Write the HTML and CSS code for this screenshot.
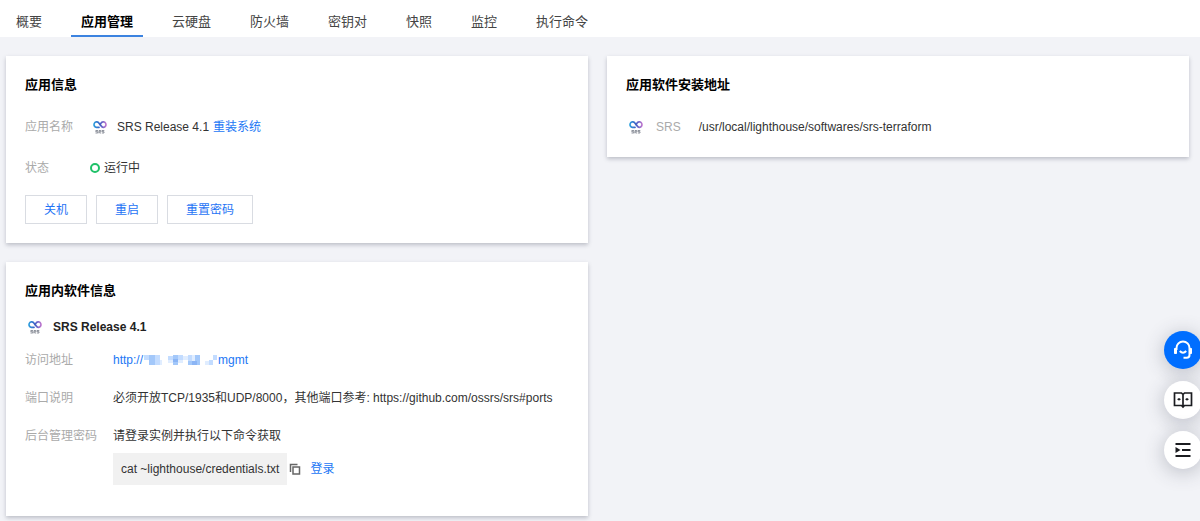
FILE: index.html
```html
<!DOCTYPE html>
<html lang="zh-CN">
<head>
<meta charset="utf-8">
<meta name="viewport" content="width=device-width, initial-scale=1">
<title>应用管理</title>
<link rel="stylesheet" href="styles.css">
</head>
<body>
<svg class="defs" aria-hidden="true">
  <defs>
    <linearGradient id="srs-gradient" gradientUnits="userSpaceOnUse" x1="3" x2="17" y1="0" y2="0">
      <stop offset="0" stop-color="#2ba5e0"/>
      <stop offset="0.5" stop-color="#3f5fc4"/>
      <stop offset="1" stop-color="#d17bd0"/>
    </linearGradient>
    <symbol id="srs-logo" viewBox="0 0 20 20">
      <path d="M9 10.300H6.500A2.700 2.700 0 1 1 8.600 5.700L11.800 9.600Q12.400 10.300 13.500 10.300A2.700 2.700 0 1 0 11.400 5.700L9.800 7.600" fill="none" stroke="url(#srs-gradient)" stroke-width="1.700" stroke-linecap="round"/>
      <path d="M8 13.500H5.800v1.200h2v1.300H5.500M9 16.400v-2.900h1.800v1.400H9.300l1.600 1.500M14.300 13.500H12v1.200h2v1.300H11.800" fill="none" stroke="#777c88" stroke-width="0.800"/>
    </symbol>
  </defs>
</svg>
<nav class="tabs">
  <a class="tab" href="#overview">概要</a>
  <a class="tab tab-active" href="#app" aria-current="page">应用管理</a>
  <a class="tab" href="#disk">云硬盘</a>
  <a class="tab" href="#firewall">防火墙</a>
  <a class="tab" href="#keys">密钥对</a>
  <a class="tab" href="#snapshot">快照</a>
  <a class="tab" href="#monitor">监控</a>
  <a class="tab" href="#command">执行命令</a>
</nav>
<main class="content">
  <div class="column">
    <section class="card">
      <h2 class="card-title">应用信息</h2>
      <dl class="info">
        <dt>应用名称</dt>
        <dd class="app-name"><svg class="logo" aria-hidden="true"><use href="#srs-logo"/></svg><span>SRS Release 4.1</span><a href="#reinstall">重装系统</a></dd>
        <dt>状态</dt>
        <dd class="status"><span class="status-dot"></span>运行中</dd>
      </dl>
      <div class="actions">
        <button class="button" type="button">关机</button>
        <button class="button" type="button">重启</button>
        <button class="button" type="button">重置密码</button>
      </div>
    </section>
    <section class="card card-software">
      <h2 class="card-title">应用内软件信息</h2>
      <h3 class="software-name"><svg class="logo" aria-hidden="true"><use href="#srs-logo"/></svg>SRS Release 4.1</h3>
      <dl class="details">
        <dt>访问地址</dt>
        <dd><a class="address" href="#mgmt">http://<svg class="mosaic" viewBox="0 0 75 12" aria-hidden="true">
          <path d="M1 1h5v5H1zM12 1h5v10h-5zM25 2h5v4h-5zM35 1h5v5h-5zM45 1h4v6h-4zM66 6h4v5h-4zM70 1h4v5h-4z" fill="#c3dcff"/>
          <path d="M6 1h6v10H6zM30 1h5v10h-5zM45 7h12v4H45zM52 1h5v6h-5z" fill="#a3c8fa"/>
          <path d="M25 6h5v3h-5zM35 6h5v3h-5zM49 1h3v6h-3zM40 2h5v4h-5zM62 7h4v4h-4zM17 6h2v5h-2z" fill="#e0edff"/>
          <path d="M30 5h5v3h-5zM49 7h5v4h-5z" fill="#8bb5f5"/>
        </svg>mgmt</a></dd>
        <dt>端口说明</dt>
        <dd>必须开放TCP/1935和UDP/8000，其他端口参考: https://github.com/ossrs/srs#ports</dd>
        <dt>后台管理密码</dt>
        <dd>请登录实例并执行以下命令获取
          <div class="command">
            <code class="command-text">cat ~lighthouse/credentials.txt</code>
            <button class="copy" type="button" aria-label="复制"><svg viewBox="0 0 12 12" aria-hidden="true"><path d="M1.500 9V1.500H8.500M4 4h6.500v7H4z" fill="none" stroke="#666" stroke-width="1.500"/></svg></button>
            <a href="#login">登录</a>
          </div>
        </dd>
      </dl>
    </section>
  </div>
  <div class="column">
    <section class="card">
      <h2 class="card-title">应用软件安装地址</h2>
      <dl class="install">
        <dt><svg class="logo" aria-hidden="true"><use href="#srs-logo"/></svg>SRS</dt>
        <dd>/usr/local/lighthouse/softwares/srs-terraform</dd>
      </dl>
    </section>
  </div>
</main>
<aside class="float-bar">
  <button class="float-button float-primary" type="button" aria-label="在线客服">
    <svg viewBox="0 0 20 20" fill="none" stroke="#fff" stroke-width="2" aria-hidden="true"><path d="M3.500 10V8a6.500 6.500 0 0 1 13 0v7a2.800 2.800 0 0 1-2.800 2.800H10.500"/><path d="M1.500 8.500h2v5h-2zM16.500 8.500h2v5h-2z" fill="#fff" stroke-width="1"/><path d="M6.800 11q3.200 3.500 6.400 0"/></svg>
  </button>
  <button class="float-button" type="button" aria-label="文档">
    <svg viewBox="0 0 20 20" fill="none" stroke="#1b1c20" stroke-width="1.700" aria-hidden="true"><path d="M10 4.500 8.500 3H1.500v12.500h7L10 17l1.500-1.500h7V3h-7L10 4.500V17"/><path d="M4.500 9.300h3M12.500 9.300h3M6 8v2.600M14 8v2.600" stroke-width="1.200"/></svg>
  </button>
  <button class="float-button" type="button" aria-label="展开菜单">
    <svg viewBox="0 0 20 20" fill="none" stroke="#1b1c20" stroke-width="1.800" aria-hidden="true"><path d="M2.500 4h15M9 10h8.500M2.500 16h15"/><path d="M2.500 7v6L7.500 10z" fill="#1b1c20" stroke="none"/></svg>
  </button>
</aside>
</body>
</html>
```

FILE: styles.css
```css
* {
  box-sizing: border-box;
}

body {
  margin: 0;
  min-height: 100vh;
  background: #f2f3f7;
  color: #333;
  font-family: "Liberation Sans", "Noto Sans CJK SC", sans-serif;
  font-size: 12px;
  line-height: 18px;
}

a {
  color: #2277f5;
  text-decoration: none;
}

h2,
h3,
dl,
dd {
  margin: 0;
}

.defs {
  position: absolute;
  width: 0;
  height: 0;
}

.tabs {
  display: flex;
  gap: 19px;
  padding: 0 6px;
  background: #fff;
}

.tab {
  padding: 13px 10px 4px;
  border-bottom: 2px solid transparent;
  color: #444;
  font-size: 13px;
}

.tab-active {
  border-bottom-color: #3c83e0;
  color: #000;
  font-weight: 700;
}

.content {
  display: grid;
  grid-template-columns: 1fr 1fr;
  gap: 19px;
  align-items: start;
  padding: 19px 11px 4px 6px;
}

.column {
  display: grid;
  gap: 19px;
}

.card {
  padding: 20px 19px 19px;
  background: #fff;
  box-shadow: 0 2px 4px rgba(54, 58, 80, 0.28);
}

.card-title {
  color: #000;
  font-size: 13px;
  line-height: 18px;
}

.logo {
  flex: none;
  width: 20px;
  height: 20px;
}

dt {
  color: #aaa;
}

.info {
  display: grid;
  grid-template-columns: 65px 1fr;
  row-gap: 22px;
  align-items: center;
  padding-top: 23px;
}

.app-name {
  display: flex;
  align-items: center;
  height: 20px;
}

.app-name span {
  margin: 0 4px 0 7px;
}

.status {
  display: flex;
  align-items: center;
  gap: 4px;
}

.status-dot {
  width: 10px;
  height: 10px;
  border: 2px solid #1fc168;
  border-radius: 50%;
}

.actions {
  display: flex;
  gap: 9px;
  padding-top: 18px;
}

.button {
  height: 29px;
  padding: 0 18px;
  border: 1px solid #d9dce2;
  background: #fff;
  color: #1f74f5;
  font: inherit;
}

.card-software {
  padding-bottom: 31px;
}

.software-name {
  display: flex;
  align-items: center;
  gap: 8px;
  padding-top: 17px;
  color: #222;
  font-size: 12px;
}

.details {
  display: grid;
  grid-template-columns: 88px 1fr;
  row-gap: 20px;
  padding-top: 14px;
}

.address {
  display: flex;
  align-items: center;
}

.mosaic {
  width: 75px;
  height: 12px;
}

.command {
  display: flex;
  align-items: center;
  padding-top: 8px;
}

.command-text {
  padding: 7px 8px;
  background: #f1f1f1;
  font: inherit;
}

.copy {
  display: flex;
  margin: 0 9px 0 2px;
  padding: 0;
  border: 0;
  background: none;
}

.copy svg {
  width: 12px;
  height: 12px;
}

.install {
  display: flex;
  align-items: center;
  gap: 18px;
  padding: 23px 0 1px;
}

.install dt {
  display: flex;
  align-items: center;
  gap: 10px;
}

.float-bar {
  position: fixed;
  right: -2px;
  bottom: 52px;
  display: grid;
  gap: 12px;
}

.float-button {
  display: grid;
  place-items: center;
  width: 38px;
  height: 38px;
  padding: 0;
  border: 0;
  border-radius: 50%;
  background: #fff;
  box-shadow: 0 3px 20px rgba(54, 58, 80, 0.3);
}

.float-primary {
  background: #006eff;
}

.float-button svg {
  width: 20px;
  height: 20px;
}
```
